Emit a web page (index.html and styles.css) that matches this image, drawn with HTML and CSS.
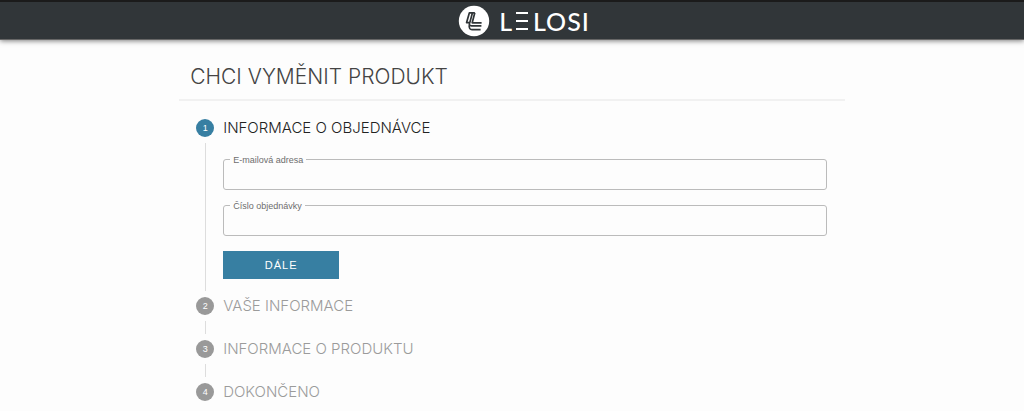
FILE: index.html
```html
<!DOCTYPE html>
<html lang="cs">
<head>
<meta charset="utf-8">
<meta name="viewport" content="width=device-width, initial-scale=1">
<title>Chci vyměnit produkt – LELOSI</title>
<link rel="stylesheet" href="styles.css">
</head>
<body>
<header class="topbar">
  <a class="brand" href="#">
    <svg class="brand-mark" viewBox="0 0 32 32" aria-hidden="true">
      <circle cx="16" cy="16" r="15.2" fill="#fff"/>
      <g fill="none" stroke="#2f3437" stroke-width="1.7" stroke-linejoin="round">
        <path d="M16.8 7.8H11.4L8.6 17.6H11.8L14.4 8"/>
        <path d="M16.8 7.8L14.2 17.8H23.6"/>
        <path d="M23.4 20.8H13.4C11.6 20.8 10.8 19.8 11.6 17.8"/>
        <path d="M11.2 20.4C11 23.4 12 24.6 14 24.6H22.6"/>
      </g>
    </svg>
    <span class="brand-name">L<span class="brand-e">E</span>LOSI</span>
  </a>
</header>
<main class="page">
  <h1 class="title">CHCI VYMĚNIT PRODUKT</h1>
  <ol class="stepper">
    <li class="step step-active">
      <span class="step-number">1</span>
      <h2 class="step-title">INFORMACE O OBJEDNÁVCE</h2>
      <form class="step-body">
        <div class="field">
          <label class="field-label" for="email">E-mailová adresa</label>
          <input class="field-input" id="email" type="email">
        </div>
        <div class="field">
          <label class="field-label" for="order">Číslo objednávky</label>
          <input class="field-input" id="order" type="text">
        </div>
        <button class="next" type="button">DÁLE</button>
      </form>
    </li>
    <li class="step">
      <span class="step-number">2</span>
      <h2 class="step-title">VAŠE INFORMACE</h2>
    </li>
    <li class="step">
      <span class="step-number">3</span>
      <h2 class="step-title">INFORMACE O PRODUKTU</h2>
    </li>
    <li class="step">
      <span class="step-number">4</span>
      <h2 class="step-title">DOKONČENO</h2>
    </li>
  </ol>
</main>
</body>
</html>
```
FILE: styles.css
```css
* { box-sizing: border-box; }

body {
  margin: 0;
  background: #fdfdfd;
  color: #222;
  font-family: "Liberation Sans", Arial, sans-serif;
}

.topbar {
  display: flex;
  justify-content: center;
  align-items: center;
  height: 40px;
  padding-left: 24px;
  border-top: 2px solid #1b1b1b;
  border-bottom: 1px solid #666;
  background: #313639;
  box-shadow: 0 1px 5px rgba(0, 0, 0, 0.5);
}

.brand {
  display: flex;
  align-items: center;
  gap: 9px;
  color: #fff;
  text-decoration: none;
}

.brand-mark { width: 32px; height: 32px; }

.brand-name {
  display: flex;
  align-items: center;
  gap: 3px;
  font: 500 25px/32px Lato, sans-serif;
  letter-spacing: 1px;
}

/* The E of the wordmark is three separate bars */
.brand-e {
  width: 12px;
  height: 18px;
  margin-right: 2px;
  color: transparent;
  font-size: 14px;
  line-height: 18px;
  letter-spacing: 0;
  background: linear-gradient(#fff 0 2px, transparent 2px 8px, #fff 8px 10px, transparent 10px 16px, #fff 16px);
}

.page {
  width: 65%;
  margin: 0 auto;
}

.title {
  margin: 0;
  padding: 23px 11px 8px;
  border-bottom: 2px solid #f1f1f1;
  color: #444;
  font: 300 21px/28px Inter, sans-serif;
}

.stepper {
  margin: 0;
  padding: 18px 18px 8px 17px;
  list-style: none;
}

.step {
  display: grid;
  grid-template-columns: 18px minmax(0, 1fr);
  column-gap: 9px;
  padding-bottom: 25px;
  position: relative;
  color: #9b9b9b;
}

.step:last-child { padding-bottom: 0; }

.step:not(:last-child)::after {
  content: "";
  position: absolute;
  left: 9px;
  top: 24px;
  bottom: 6px;
  width: 1px;
  background: #ddd;
}

.step-active {
  padding-bottom: 18px;
  color: #222;
}

.step-number {
  width: 18px;
  height: 18px;
  border-radius: 50%;
  background: #999;
  color: #fff;
  font-size: 9px;
  line-height: 18px;
  text-align: center;
}

.step-active .step-number { background: #377fa2; }

.step-title {
  margin: 0;
  font: 300 15px/18px Inter, sans-serif;
}

.step-body {
  grid-column: 2;
  display: grid;
  gap: 15px;
  justify-items: start;
  padding-top: 22px;
}

.field {
  position: relative;
  width: 100%;
}

.field-label {
  position: absolute;
  left: 7px;
  top: -5px;
  padding: 0 3px;
  background: #fdfdfd;
  color: #6d6d6d;
  font-size: 9px;
  line-height: 12px;
}

.field-input {
  display: block;
  width: 100%;
  height: 31px;
  padding: 0 10px;
  border: 1px solid #bbb;
  border-radius: 3px;
  background: transparent;
  font: inherit;
  font-size: 12px;
}

.next {
  width: 116px;
  height: 28px;
  padding: 0;
  border: 0;
  background: #377fa2;
  color: #fff;
  font: 11px/28px "Liberation Sans", Arial, sans-serif;
  letter-spacing: 1px;
}
```
